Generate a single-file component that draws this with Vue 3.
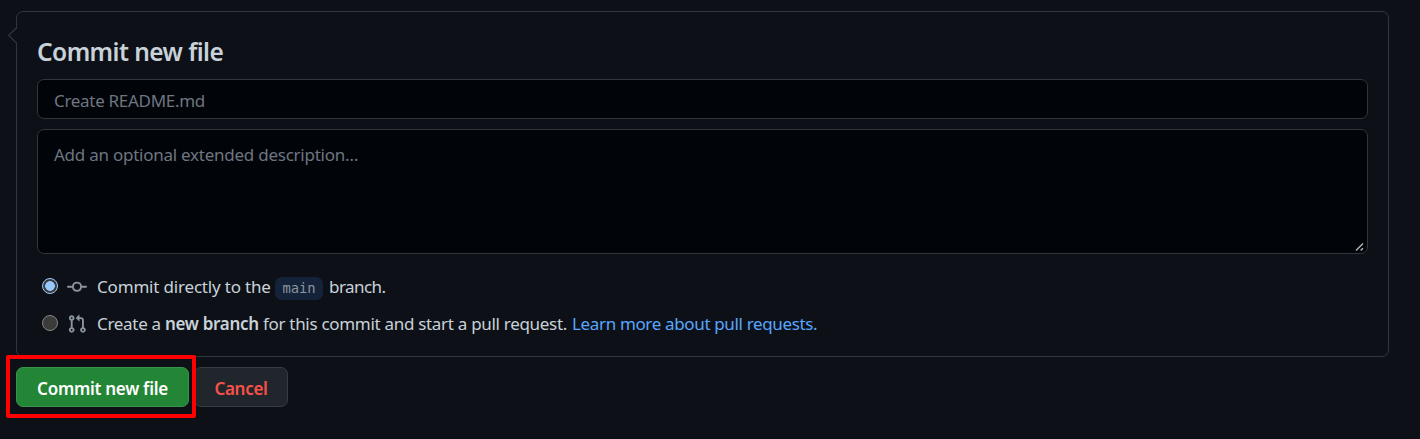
<script setup>
const branch = 'main'
</script>

<template>
  <main class="page">
    <section class="card">
      <svg class="caret" width="10" height="20" viewBox="0 0 10 20">
        <path class="caret-fill" d="M10 1.5 1.5 9.5 10 18Z" />
        <path class="caret-line" d="M9 1.2 .8 9.4 9 17.6" />
      </svg>
      <h3 class="title">Commit new file</h3>
      <div class="field summary"><span class="t-summary">Create README.md</span></div>
      <div class="field description">
        <span class="t-description">Add an optional extended description…</span>
        <svg class="grip" width="10" height="10" viewBox="0 0 10 10">
          <path d="M1 8.5 8 1.5M5.7 8.5 8 6.2" />
        </svg>
      </div>
      <div class="option first">
        <span class="radio checked"></span>
        <svg class="icon" width="20" height="20" viewBox="0 0 16 16">
          <path fill-rule="evenodd" d="M10.5 7.75a2.5 2.5 0 1 1-5 0 2.5 2.5 0 0 1 5 0Zm1.43.75a4.002 4.002 0 0 1-7.86 0H.75a.75.75 0 1 1 0-1.5h3.32a4.001 4.001 0 0 1 7.86 0h3.32a.75.75 0 1 1 0 1.5h-3.32Z" />
        </svg>
        <span class="t-direct">Commit directly to the</span>
        <code class="branch">{{ branch }}</code>
        <span class="t-branch">branch.</span>
      </div>
      <div class="option">
        <span class="radio"></span>
        <svg class="icon" width="20" height="20" viewBox="0 0 16 16">
          <path fill-rule="evenodd" d="M7.177 3.073 9.573.677A.25.25 0 0 1 10 .854v4.792a.25.25 0 0 1-.427.177L7.177 3.427a.25.25 0 0 1 0-.354ZM3.75 2.5a.75.75 0 1 0 0 1.5.75.75 0 0 0 0-1.5Zm-2.25.75a2.25 2.25 0 1 1 3 2.122v5.256a2.251 2.251 0 1 1-1.5 0V5.372A2.25 2.25 0 0 1 1.5 3.25ZM11 2.5h-1V4h1a1 1 0 0 1 1 1v5.628a2.251 2.251 0 1 0 1.5 0V5A2.5 2.5 0 0 0 11 2.5Zm1 10.25a.75.75 0 1 1 1.5 0 .75.75 0 0 1-1.5 0ZM3.75 12a.75.75 0 1 0 0 1.5.75.75 0 0 0 0-1.5Z" />
        </svg>
        <span class="t-create">Create a <b>new branch</b> for this commit and start a pull request.</span>
        <a class="link">Learn more about pull requests.</a>
      </div>
    </section>
    <div class="actions">
      <div class="primary-wrap">
        <button class="btn primary"><span>Commit new file</span></button>
        <span class="highlight"></span>
      </div>
      <button class="btn cancel"><span>Cancel</span></button>
    </div>
  </main>
</template>

<style>
body { background: #0d1117; }
</style>

<style scoped>
* { box-sizing: border-box; }
.page {
  height: 439px;
  padding: 11px 31px 0 16px;
  overflow: hidden;
  background: #0d1117;
  color: #c9d1d9;
  font-family: "Noto Sans", "Open Sans", sans-serif;
  font-size: 17px;
  letter-spacing: -.25px;
  white-space: nowrap;
}
.card {
  position: relative;
  height: 346px;
  padding: 24px 20px 0;
  border: 1px solid #30363d;
  border-radius: 7px;
}
.caret { position: absolute; left: -9px; top: 14px; }
.caret-fill { fill: #0d1117; }
.caret-line { fill: none; stroke: #30363d; stroke-width: 1.3; }
.title { margin: 0 0 11px; height: 32px; line-height: 32px; font-size: 24.5px; font-weight: 600; letter-spacing: -.55px; }
.field {
  position: relative;
  padding: 0 16px;
  background: #010409;
  border: 1px solid #30363d;
  border-radius: 7px;
  color: #6e7681;
}
.summary { height: 40px; line-height: 41px; letter-spacing: -.3px; }
.description { height: 125px; margin-top: 10px; line-height: 49px; }
.grip { position: absolute; right: 2px; bottom: 1px; fill: none; stroke: #b4b4b4; stroke-width: 1.5; }
.option { display: flex; align-items: center; height: 37px; padding-left: 5px; }
.option.first { margin-top: 14px; }
.radio {
  width: 16px; height: 16px; margin-right: 9px;
  flex: none; position: relative; top: -1px;
  border: 1px solid #858585; border-radius: 50%; background: #3b3b3b;
}
.radio.checked { border: 1.5px solid #99c8ff; background: radial-gradient(circle, #99c8ff 4.5px, #3b3b3b 5.2px); }
.icon { flex: none; margin-right: 10px; fill: #8b949e; }
.branch {
  display: block; width: 48px; height: 23px; margin: 4px 6px 0 0;
  text-align: center; line-height: 23px; letter-spacing: 0;
  font-family: "DejaVu Sans Mono", monospace; font-size: 13.8px;
  background: #15233a; border-radius: 7px; color: #8b949e;
}
.t-direct { width: 178px; letter-spacing: -.18px; }
.t-branch { letter-spacing: -.55px; }
.t-create { width: 475px; letter-spacing: -.3px; }
.link { color: #58a6ff; letter-spacing: -.35px; }
b { font-weight: 600; }
.actions { display: flex; margin-top: 10px; gap: 5px; }
.primary-wrap { position: relative; }
.btn {
  display: block; height: 40px; padding: 2px 0 0; text-align: center;
  border: 1px solid #363b42; border-radius: 7px;
  font: 600 17px/38px "Noto Sans", sans-serif; letter-spacing: -.28px;
}
.primary { width: 173px; background: #238636; border-color: #3a924b; color: #fff; }
.cancel { width: 94px; background: #21262d; color: #f85149; }
.highlight { position: absolute; left: -10px; top: -12px; width: 190px; height: 63px; border: 4px solid #f00; border-radius: 2px; }
</style>
